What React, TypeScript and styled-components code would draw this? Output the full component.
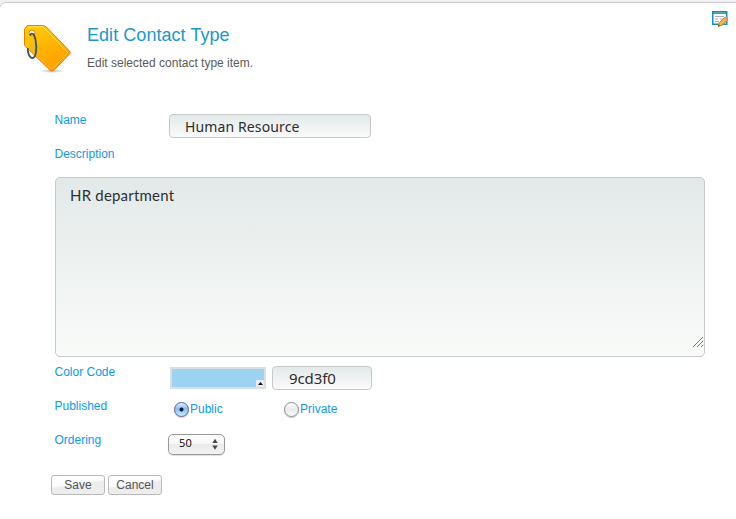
import React, { useState } from "react";
import styled, { createGlobalStyle } from "styled-components";

const GlobalStyle = createGlobalStyle`
  * { box-sizing: border-box; }
  body {
    margin: 0;
    background: #f1f1f1;
    overflow: hidden;
    font-family: "Liberation Sans", Arial, sans-serif;
    font-size: 12px;
  }
`;

const Panel = styled.main`
  height: 540px;
  margin: 2px -12px 0 -1px;
  border: 1px solid #cbcbcb;
  border-radius: 7px;
  background: #fff;
`;

const Header = styled.header`
  display: flex;
  align-items: flex-start;
  height: 105px;
  padding: 19px 18px 0 22px;
`;

const Heading = styled.div`
  flex: 1;
  margin-left: 13px;
`;

const Title = styled.h1`
  margin: 0;
  font-size: 18px;
  line-height: 26px;
  font-weight: 400;
  letter-spacing: 0.05px;
  color: #1c98cb;
`;

const Subtitle = styled.p`
  margin: 7px 0 0;
  line-height: 16px;
  color: #5b5b5b;
`;

const EditLink = styled.a`
  display: block;
  margin-top: -11px;
  line-height: 0;
`;

const Form = styled.form`
  display: flex;
  flex-direction: column;
  padding-left: 54px;
`;

const Row = styled.div`
  display: grid;
  grid-template-columns: 114px auto;
  justify-content: start;
  align-items: start;
  height: 34px;
`;

const Label = styled.label`
  padding: 4px 0 0 0.5px;
  line-height: 16px;
  color: #0c9bea;
`;

const TextInput = styled.input<{ $width: number; $indent: number; $size: number; $tracking: number; $drop: number }>`
  width: ${(p) => p.$width}px;
  height: 24px;
  padding: ${(p) => p.$drop}px 4px ${(p) => 1 - p.$drop}px ${(p) => p.$indent}px;
  border: 1px solid #c6c9c9;
  border-radius: 4px;
  outline: none;
  background: linear-gradient(#e3e9e9, #fafbfa);
  font-family: "Noto Sans", sans-serif;
  font-size: ${(p) => p.$size}px;
  letter-spacing: ${(p) => p.$tracking}px;
  color: #2d2d2d;
`;

const NameSlot = styled.div`
  display: flex;
  padding: 6px 0 0 1px;
`;

const AreaFrame = styled.div`
  position: relative;
  width: 650px;
  height: 180px;
  margin: 1px 0 3px 1px;
`;

const TextArea = styled.textarea`
  display: block;
  width: 100%;
  height: 100%;
  padding: 8px 14px;
  border: 1px solid #c6c9c9;
  border-radius: 5px;
  outline: none;
  resize: none;
  background: linear-gradient(#e3e9e9, #f9fbf9);
  font-family: Lato, sans-serif;
  font-size: 15px;
  line-height: 19px;
  letter-spacing: 0.2px;
  color: #303030;
`;

const Grip = styled.svg`
  position: absolute;
  right: 1px;
  bottom: 9px;
`;

const ColorSlot = styled.div`
  display: flex;
  gap: 6px;
  padding: 6px 0 0 2px;
`;

const Swatch = styled.button`
  display: flex;
  justify-content: flex-end;
  align-items: flex-end;
  width: 96px;
  height: 22px;
  margin-top: 1px;
  padding: 0;
  border: 2px solid #d9dfe5;
  background: #9cd3f0;
`;

const SwatchArrow = styled.span`
  display: flex;
  align-items: center;
  justify-content: center;
  width: 8px;
  height: 7px;
  background: #e9edf1;
`;

const RadioGroup = styled.div`
  display: grid;
  grid-template-columns: 110px auto;
  padding: 6px 0 0 5.5px;
`;

const RadioOption = styled.label`
  display: flex;
  align-items: center;
  gap: 1.5px;
  height: 18px;
  color: #0c9bea;
`;

const Radio = styled.input`
  appearance: none;
  flex: none;
  width: 15px;
  height: 15px;
  margin: 0;
  border: 1px solid #8b8b8b;
  border-radius: 50%;
  background: linear-gradient(#fff, #eaeaea 50%, #fdfdfd);
  box-shadow: 0 1px 1px #ccc;

  &:checked {
    border-color: #525f9c;
    background: radial-gradient(circle at 50% 50%, #081b34 0 1.6px, transparent 2.4px),
      linear-gradient(#e1eefb, #8bbcec 45%, #c5f2ff);
  }
`;

const Select = styled.button`
  display: flex;
  align-items: center;
  justify-content: space-between;
  width: 57px;
  height: 21px;
  margin-top: 6px;
  padding: 0 6px 2px 10px;
  border: 1px solid #999;
  border-radius: 5px;
  background: linear-gradient(#fff, #f7f7f7 45%, #ebebeb 50%, #f2f2f2);
  box-shadow: 0 1px 1px #ddd;
  font-family: "Open Sans", sans-serif;
  font-size: 11px;
  font-weight: 500;
  line-height: 15px;
  letter-spacing: 0.3px;
  color: #000;
`;

const SelectValue = styled.span`
  margin-top: -2px;
`;

const Actions = styled.div`
  display: flex;
  gap: 3px;
  margin: 13px 0 0 -3px;
`;

const Button = styled.button`
  width: 54px;
  height: 20px;
  padding: 0;
  border: 1px solid #b9b9b9;
  border-radius: 3px;
  background: linear-gradient(172deg, #ebebeb, #eee 46%, #fcfcfc 54%, #fff);
  background: linear-gradient(172deg, #fff, #fcfcfc 42%, #ececec 50%, #eee);
  font-family: "Liberation Sans", Arial, sans-serif;
  font-size: 12px;
  line-height: 17px;
  color: #555;
`;

function TagIcon() {
  return (
    <svg width="52" height="52" viewBox="0 0 52 52" fill="none">
      <defs>
        <linearGradient id="tag" x1="10" y1="3" x2="34" y2="45" gradientUnits="userSpaceOnUse">
          <stop stopColor="#ffce08" />
          <stop offset="0.55" stopColor="#ffb300" />
          <stop offset="1" stopColor="#ff9f00" />
        </linearGradient>
        <radialGradient id="tagShadow">
          <stop stopColor="#777" stopOpacity="0.6" />
          <stop offset="1" stopColor="#999" stopOpacity="0" />
        </radialGradient>
      </defs>
      <ellipse cx="30" cy="49" rx="13" ry="2" fill="url(#tagShadow)" />
      <path
        fillRule="evenodd"
        d="M5.5 3.5H20.5Q22.5 3.5 24.5 5L47.5 29Q49 30.5 47.5 32L32.5 47.8Q30 50 27.5 47.7L3.5 24.5Q2.5 23.5 2.5 22V7Z M10 8A3 3 0 1 0 10 14A3 3 0 1 0 10 8Z"
        fill="url(#tag)"
        stroke="#ed7d00"
      />
      <path d="M6.5 4.8H21L46 31" stroke="#ffe046" strokeWidth="1" />
      <path d="M5 24L29 47L31 46L45.5 31.5" stroke="#ffc331" strokeWidth="0.8" />
      <path
        d="M8 13.5C10 9.5 12.5 12 13.5 18C15.5 28 13.5 36 10.5 36C7.5 36 5.5 31 5.8 26"
        stroke="#47544c"
        strokeWidth="1.8"
      />
      <path d="M9.5 12.5C12 14 13.7 26 11.7 33" stroke="#b3b7a0" strokeWidth="0.6" />
    </svg>
  );
}

function EditIcon() {
  return (
    <svg width="17" height="17" viewBox="0 0 17 17" fill="none">
      <rect x="0.75" y="0.75" width="14" height="12.5" fill="#fff" stroke="#168dc2" strokeWidth="1.5" />
      <path d="M1 2H15" stroke="#2295c6" strokeWidth="2" />
      <path d="M2 2H13" stroke="#83c8e4" strokeWidth="0.7" />
      <path d="M3 5.5H12M3 8H6M8 8H12M3 10.5H7" stroke="#a9adb0" />
      <path d="M6 15.5L7.5 11.5L13 6L16 8.8L10.2 14.3Z" fill="#f6a431" stroke="#b57726" strokeWidth="0.7" />
      <path d="M8.5 13L14 7.5" stroke="#ffd166" />
      <path d="M12.7 6.5L14 5.5Q16 5.5 16.3 7.5L15.2 8.8Z" fill="#cf8bb3" />
      <path d="M6 15.5L6.6 13.8L7.8 14.9Z" fill="#343434" />
    </svg>
  );
}

export default function App() {
  const [name, setName] = useState("Human Resource");
  const [description, setDescription] = useState("HR department");
  const [color, setColor] = useState("9cd3f0");
  const [visibility, setVisibility] = useState("Public");

  return (
    <>
      <GlobalStyle />
      <Panel>
        <Header>
          <TagIcon />
          <Heading>
            <Title>Edit Contact Type</Title>
            <Subtitle>Edit selected contact type item.</Subtitle>
          </Heading>
          <EditLink aria-label="Edit">
            <EditIcon />
          </EditLink>
        </Header>
        <Form onSubmit={(e) => e.preventDefault()}>
          <Row>
            <Label>Name</Label>
            <NameSlot>
              <TextInput $width={202} $indent={15} $size={14} $tracking={0.12} $drop={1} value={name} onChange={(e) => setName(e.target.value)} />
            </NameSlot>
          </Row>
          <Row>
            <Label>Description</Label>
          </Row>
          <AreaFrame>
            <TextArea value={description} onChange={(e) => setDescription(e.target.value)} />
            <Grip width="12" height="12" viewBox="0 0 12 12" fill="none">
              <path d="M1 11L11 1M5 11L11 5M9 11L11 9" stroke="#777" />
            </Grip>
          </AreaFrame>
          <Row>
            <Label>Color Code</Label>
            <ColorSlot>
              <Swatch type="button" aria-label="Pick color">
                <SwatchArrow>
                  <svg width="5" height="3" viewBox="0 0 5 3">
                    <path d="M0 3L2.5 0L5 3Z" fill="#111" />
                  </svg>
                </SwatchArrow>
              </Swatch>
              <TextInput $width={100} $indent={16} $size={15} $tracking={-0.1} $drop={0} value={color} onChange={(e) => setColor(e.target.value)} />
            </ColorSlot>
          </Row>
          <Row>
            <Label>Published</Label>
            <RadioGroup>
              {["Public", "Private"].map((option) => (
                <RadioOption key={option}>
                  <Radio type="radio" name="visibility" checked={visibility === option} onChange={() => setVisibility(option)} />
                  {option}
                </RadioOption>
              ))}
            </RadioGroup>
          </Row>
          <Row>
            <Label>Ordering</Label>
            <Select type="button">
              <SelectValue>50</SelectValue>
              <svg width="6" height="12" viewBox="0 0 6 12">
                <path d="M0.3 5L3 0.8L5.7 5ZM0.3 7.5H5.7L3 11.7Z" fill="#444" />
              </svg>
            </Select>
          </Row>
          <Actions>
            <Button type="submit">Save</Button>
            <Button type="button">Cancel</Button>
          </Actions>
        </Form>
      </Panel>
    </>
  );
}
